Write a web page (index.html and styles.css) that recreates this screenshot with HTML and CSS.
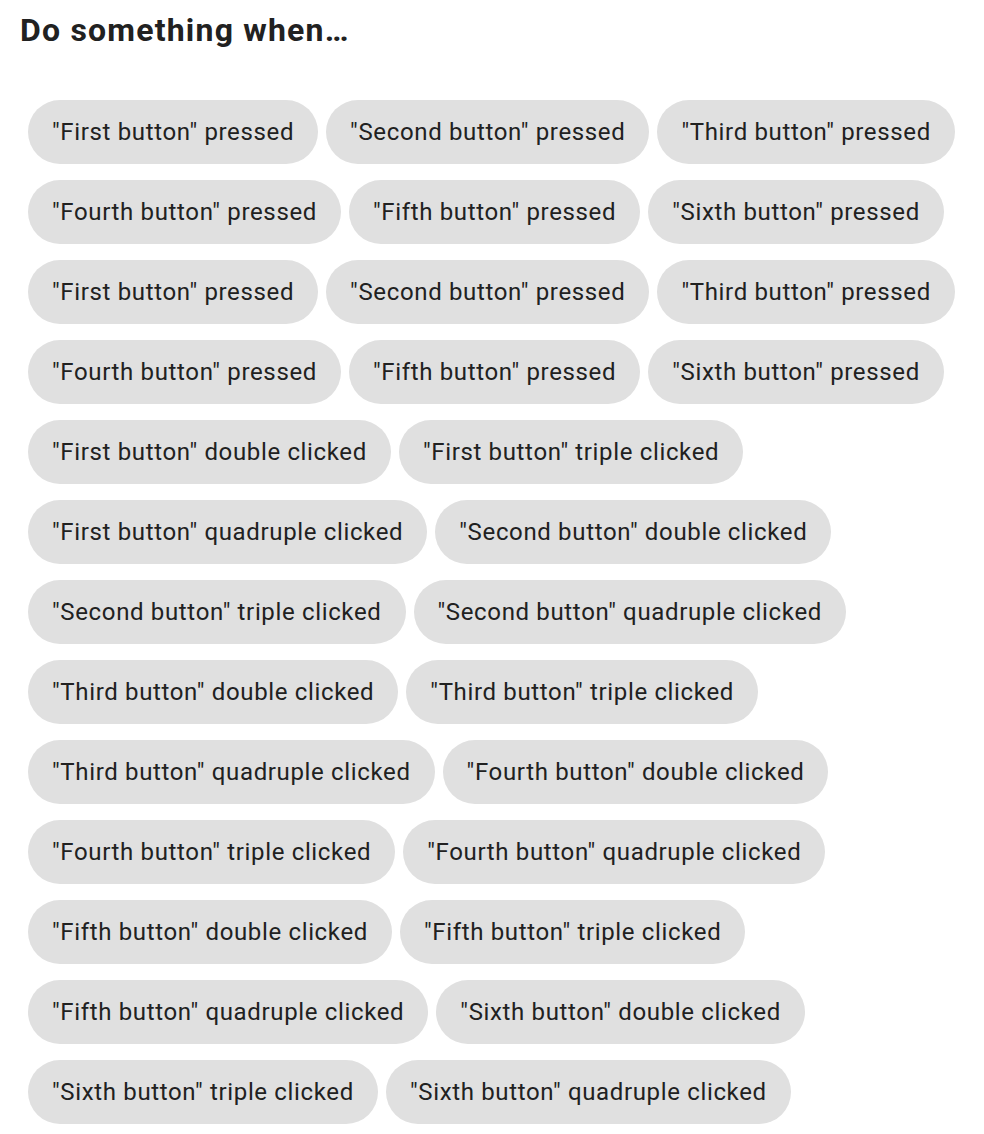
FILE: index.html
```html
<!DOCTYPE html>
<html>
<head>
<meta charset="utf-8">
<link rel="stylesheet" href="styles.css">
</head>
<body>
<h1 class="title">Do something when…</h1>
<div class="chips">
  <span class="chip">"First button" pressed</span>
  <span class="chip">"Second button" pressed</span>
  <span class="chip">"Third button" pressed</span>
  <span class="chip">"Fourth button" pressed</span>
  <span class="chip">"Fifth button" pressed</span>
  <span class="chip">"Sixth button" pressed</span>
  <span class="chip">"First button" pressed</span>
  <span class="chip">"Second button" pressed</span>
  <span class="chip">"Third button" pressed</span>
  <span class="chip">"Fourth button" pressed</span>
  <span class="chip">"Fifth button" pressed</span>
  <span class="chip">"Sixth button" pressed</span>
  <span class="chip">"First button" double clicked</span>
  <span class="chip">"First button" triple clicked</span>
  <span class="chip">"First button" quadruple clicked</span>
  <span class="chip">"Second button" double clicked</span>
  <span class="chip">"Second button" triple clicked</span>
  <span class="chip">"Second button" quadruple clicked</span>
  <span class="chip">"Third button" double clicked</span>
  <span class="chip">"Third button" triple clicked</span>
  <span class="chip">"Third button" quadruple clicked</span>
  <span class="chip">"Fourth button" double clicked</span>
  <span class="chip">"Fourth button" triple clicked</span>
  <span class="chip">"Fourth button" quadruple clicked</span>
  <span class="chip">"Fifth button" double clicked</span>
  <span class="chip">"Fifth button" triple clicked</span>
  <span class="chip">"Fifth button" quadruple clicked</span>
  <span class="chip">"Sixth button" double clicked</span>
  <span class="chip">"Sixth button" triple clicked</span>
  <span class="chip">"Sixth button" quadruple clicked</span>
</div>
</body>
</html>
```
FILE: styles.css
```css
html, body {
  margin: 0;
  padding: 0;
  background: #ffffff;
}
body {
  font-family: Roboto, "Liberation Sans", sans-serif;
  color: #212121;
  padding: 0 12px 0 20px;
}
.title {
  margin: 0;
  padding-top: 10px;
  font-size: 32px;
  line-height: 40px;
  font-weight: 700;
  letter-spacing: 1.2px;
}
.chips {
  display: flex;
  flex-wrap: wrap;
  gap: 16px 8px;
  padding: 50px 0 0 8px;
}
.chip {
  display: inline-flex;
  align-items: center;
  height: 64px;
  padding: 0 24px;
  border-radius: 32px;
  background: #e0e0e0;
  font-size: 24px;
  letter-spacing: 0.65px;
  white-space: nowrap;
}
```
